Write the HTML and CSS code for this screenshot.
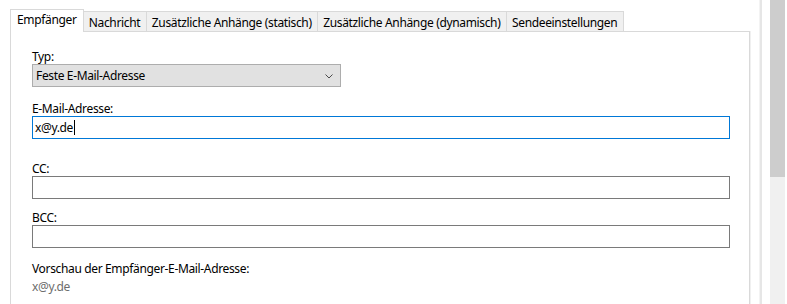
FILE: index.html
```html
<!DOCTYPE html>
<html lang="de">
<head>
    <meta charset="UTF-8">
    <meta name="viewport" content="width=device-width, initial-scale=1.0">
    <title>Empfänger</title>
    <link rel="stylesheet" href="styles.css">
</head>
<body>
    <div class="window">
        <div class="main">
            <div class="tabs">
                <div class="tab active">Empfänger</div>
                <div class="tab">Nachricht</div>
                <div class="tab">Zusätzliche Anhänge (statisch)</div>
                <div class="tab">Zusätzliche Anhänge (dynamisch)</div>
                <div class="tab">Sendeeinstellungen</div>
            </div>
            <div class="panel">
                <div class="form-group group-type">
                    <div class="label">Typ:</div>
                    <div class="select">
                        <span>Feste E-Mail-Adresse</span>
                        <svg class="chevron" width="8" height="5" viewBox="0 0 8 5">
                            <path d="M0.5 0.5 L4 4 L7.5 0.5" fill="none" stroke="#4a4a4a" stroke-width="1"/>
                        </svg>
                    </div>
                </div>
                <div class="form-group group-mail">
                    <div class="label">E-Mail-Adresse:</div>
                    <div class="textbox focused">x@y.de<span class="caret"></span></div>
                </div>
                <div class="form-group group-cc">
                    <div class="label">CC:</div>
                    <div class="textbox"></div>
                </div>
                <div class="form-group group-bcc">
                    <div class="label">BCC:</div>
                    <div class="textbox"></div>
                </div>
                <div class="form-group group-preview">
                    <div class="label">Vorschau der Empfänger-E-Mail-Adresse:</div>
                    <div class="preview">x@y.de</div>
                </div>
            </div>
        </div>
        <div class="splitter"></div>
        <div class="scrollbar">
            <div class="thumb"></div>
        </div>
    </div>
</body>
</html>
```

FILE: styles.css
```css
/* Global */
body {
    margin: 0;
    padding: 0;
    background: #fff;
    color: #000;
    font-family: 'Noto Sans', 'Open Sans', sans-serif;
    font-size: 12px;
    letter-spacing: -0.35px;
}

.window {
    display: flex;
    height: 304px;
    overflow: hidden;
}

/* Tabs + panel */
.main {
    width: 740px;
    padding-left: 10px;
    padding-top: 9px;
    display: flex;
    flex-direction: column;
}

.tabs {
    display: flex;
    align-items: flex-end;
    height: 22px;
    position: relative;
    z-index: 1;
}

.tab {
    height: 20px;
    box-sizing: border-box;
    padding: 2px 5.3px 0;
    line-height: 17px;
    background: #f0f0f0;
    border: 1px solid #d9d9d9;
    border-bottom: none;
    border-left: none;
    white-space: nowrap;
}

.tab.active {
    height: 23px;
    margin-bottom: -1px;
    padding: 1px 6px 0;
    background: #fff;
    border-left: 1px solid #d9d9d9;
    line-height: 18px;
}

.panel {
    flex: 1;
    border: 1px solid #d9d9d9;
    border-bottom: none;
    box-shadow: 1px 0 0 #f0f0f0;
    padding: 17px 19px 0 21px;
}

/* Fields */
.label {
    line-height: 15px;
    height: 15px;
}

.group-mail { margin-top: 14px; }
.group-cc { margin-top: 22px; }
.group-bcc { margin-top: 11px; }
.group-preview { margin-top: 13px; }

.select {
    width: 309px;
    height: 23px;
    box-sizing: border-box;
    background: #e1e1e1;
    border: 1px solid #adadad;
    display: flex;
    align-items: center;
    justify-content: space-between;
    padding: 0 7px 0 3px;
}

.chevron {
    margin-top: 1px;
}

.textbox {
    height: 23px;
    box-sizing: border-box;
    border: 1px solid #7a7a7a;
    padding: 0 2px;
    line-height: 21px;
    display: flex;
    align-items: center;
}

.textbox.focused {
    border-color: #0078d7;
}

.caret {
    display: inline-block;
    width: 1px;
    height: 15px;
    background: #000;
    margin-left: 1px;
}

.preview {
    margin-top: 3px;
    line-height: 15px;
    color: #6d6d6d;
}

/* Right side */
.splitter {
    width: 2px;
    margin-left: 9px;
    background: #e6e6e6;
    border-left: 1px solid #f3f3f3;
}

.scrollbar {
    width: 15px;
    margin-left: 8px;
    margin-right: 1px;
    background: #f0f0f0;
}

.thumb {
    height: 177px;
    background: #cdcdcd;
}
```
